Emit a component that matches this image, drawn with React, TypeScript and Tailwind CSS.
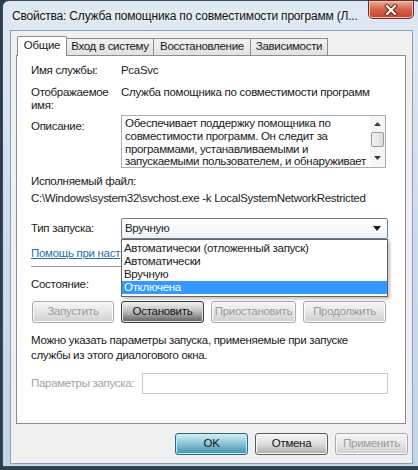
import React from "react";

const btnBase =
  "h-[22px] rounded-[3px] border flex items-center justify-center text-[11.5px] leading-none";

function DisabledBtn({ label, w }: { label: string; w: string }) {
  return (
    <div
      className={`${btnBase} ${w} border-[#a6abb0] bg-gradient-to-b from-[#f6f6f6] via-[#e6e6e6] to-[#cfcfcf] text-[#9a9a9a] shadow-[inset_0_0_0_1px_#fbfbfb]`}
    >
      {label}
    </div>
  );
}

export default function App() {
  return (
    <div className="w-[418px] h-[470px] overflow-hidden bg-[#2e3d4b] font-['Liberation_Sans','Noto_Sans',sans-serif] text-[11.5px] tracking-[-0.3px] text-[#1a1a1a]">
      {/* window */}
      <div className="relative ml-[2px] w-[420px] h-[467px] rounded-t-[7px] border border-[#3a4b5c] bg-gradient-to-b from-[#dfe9f3] via-[#cddced] to-[#c3d5e8] pl-[7px] flex flex-col">
        {/* title bar */}
        <div className="h-[29px] flex items-center">
          <div className="ml-[2px] whitespace-nowrap text-[12px] tracking-[-0.2px] text-[#111] [text-shadow:0_0_6px_#ffffff]">
            Свойства: Служба помощника по совместимости программ (Л...
          </div>
        </div>
        {/* close button */}
        <div className="absolute left-[365px] top-[-1px] w-[46px] h-[19px] rounded-b-[5px] border border-[#6b2a22] bg-gradient-to-b from-[#eab1a2] via-[#d5604a] to-[#c4432c] shadow-[inset_0_0_0_1px_#f3c3b6] flex items-center justify-center">
          <svg width="14" height="12" viewBox="0 0 14 12">
            <path d="M3 2 L11 10 M11 2 L3 10" stroke="#5a2018" strokeWidth="4" strokeLinecap="square" />
            <path d="M3 2 L11 10 M11 2 L3 10" stroke="#ffffff" strokeWidth="2.2" strokeLinecap="square" />
          </svg>
        </div>

        {/* content area */}
        <div className="w-[403px] h-[434px] border border-[#8a9fb3] bg-[#f0f0f0] flex flex-col">
          {/* tabs */}
          <div className="relative z-10 ml-[6px] mt-[5px] h-[20px] flex items-end">
            <div className="h-[20px] w-[50px] border border-b-0 border-[#898c95] bg-white rounded-t-[2px] flex items-center justify-center pb-[1px]">
              Общие
            </div>
            <div className="h-[18px] w-[87px] border border-l-0 border-[#898c95] bg-gradient-to-b from-[#f2f2f2] to-[#e1e1e1] flex items-center justify-center">
              Вход в систему
            </div>
            <div className="h-[18px] w-[97px] border border-l-0 border-[#898c95] bg-gradient-to-b from-[#f2f2f2] to-[#e1e1e1] flex items-center justify-center">
              Восстановление
            </div>
            <div className="h-[18px] w-[77px] border border-l-0 border-[#898c95] bg-gradient-to-b from-[#f2f2f2] to-[#e1e1e1] flex items-center justify-center">
              Зависимости
            </div>
          </div>

          {/* panel */}
          <div className="relative ml-[5px] mt-[-1px] w-[390px] h-[369px] border border-[#898c95] bg-white pl-[14px] pr-[17px] flex flex-col">
            {/* row 1 */}
            <div className="mt-[7px] flex leading-[15px]">
              <div className="w-[90px]">Имя службы:</div>
              <div>PcaSvc</div>
            </div>
            {/* row 2 */}
            <div className="mt-[8px] flex leading-[13px]">
              <div className="w-[90px]">
                Отображаемое
                <br />
                имя:
              </div>
              <div className="whitespace-nowrap">Служба помощника по совместимости программ</div>
            </div>
            {/* row 3 */}
            <div className="mt-[3px] flex">
              <div className="w-[90px] pt-[4px] leading-[15px]">Описание:</div>
              <div className="w-[265px] h-[53px] border border-[#abadb3] flex">
                <div className="flex-1 pl-[3px] pt-[1px] leading-[12.8px] overflow-hidden whitespace-nowrap">
                  Обеспечивает поддержку помощника по
                  <br />
                  совместимости программ. Он следит за
                  <br />
                  программами, устанавливаемыми и
                  <br />
                  запускаемыми пользователем, и обнаруживает
                </div>
                <div className="w-[15px] flex flex-col items-center bg-[#f6f6f6]">
                  <svg width="7" height="4" viewBox="0 0 7 4" className="mt-[6px]">
                    <path d="M0 4 L3.5 0 L7 4 Z" fill="#3a3a3a" />
                  </svg>
                  <div className="mt-[6px] w-[13px] h-[15px] rounded-[2px] border border-[#9a9a9a] bg-gradient-to-r from-[#f4f4f4] to-[#dcdcdc]" />
                  <svg width="7" height="4" viewBox="0 0 7 4" className="mt-[9px]">
                    <path d="M0 0 L3.5 4 L7 0 Z" fill="#3a3a3a" />
                  </svg>
                </div>
              </div>
            </div>
            {/* row 4 */}
            <div className="mt-[6px] leading-[15px]">Исполняемый файл:</div>
            <div className="mt-[2px] leading-[15px] whitespace-nowrap">
              C:\Windows\system32\svchost.exe -k LocalSystemNetworkRestricted
            </div>
            {/* row 6 combo */}
            <div className="relative mt-[12px] flex items-center">
              <div className="w-[90px] leading-[15px]">Тип запуска:</div>
              <div className="w-[267px] h-[21px] border border-[#6f8196] rounded-[2px] bg-gradient-to-b from-[#ffffff] to-[#eef3f8] flex items-center pl-[3px] pr-[6px]">
                <div className="flex-1">Вручную</div>
                <svg width="8" height="5" viewBox="0 0 8 5">
                  <path d="M0 0 L8 0 L4 5 Z" fill="#1a1a1a" />
                </svg>
              </div>
              {/* dropdown list */}
              <div className="absolute z-20 left-[90px] top-[21px] w-[267px] border border-[#646464] bg-white pt-[2px] pb-[2px] leading-[13px] shadow-[2px_2px_3px_rgba(0,0,0,0.25)]">
                <div className="pl-[2px]">Автоматически (отложенный запуск)</div>
                <div className="pl-[2px]">Автоматически</div>
                <div className="pl-[2px]">Вручную</div>
                <div className="pl-[2px] bg-[#3399ff] text-white">Отключена</div>
              </div>
            </div>
            {/* link (rest is hidden under the open list) */}
            <div className="mt-[7px] w-[90px] overflow-hidden leading-[15px] text-[#1f6fa8] underline whitespace-nowrap">
              Помощь при наст
            </div>
            <div className="mt-[5px] h-[2px] border-t border-[#a0a0a0] border-b border-b-white" />
            <div className="mt-[9px] flex leading-[15px]">
              <div className="w-[90px]">Состояние:</div>
            </div>
            {/* buttons */}
            <div className="mt-[9px] flex gap-[7px] pl-[1px]">
              <DisabledBtn label="Запустить" w="w-[82px]" />
              <div
                className={`${btnBase} w-[83px] border-[#3c3c3c] bg-gradient-to-b from-[#f4f4f4] via-[#b9b9b9] to-[#5e5e5e] text-[#111] shadow-[inset_0_0_0_1px_#e8e8e8]`}
              >
                Остановить
              </div>
              <DisabledBtn label="Приостановить" w="w-[85px]" />
              <DisabledBtn label="Продолжить" w="w-[83px]" />
            </div>
            <div className="mt-[10px] leading-[15px]">
              Можно указать параметры запуска, применяемые при запуске
              <br />
              службы из этого диалогового окна.
            </div>
            <div className="mt-[10px] flex items-center">
              <div className="w-[111px] whitespace-nowrap text-[#a3a3a3]">Параметры запуска:</div>
              <div className="w-[246px] h-[21px] border border-[#c5c8cc] bg-white" />
            </div>
          </div>

          {/* bottom buttons */}
          <div className="mt-[9px] flex justify-end gap-[7px] pr-[4px]">
            <div
              className={`${btnBase} w-[73px] border-[#2c6a82] bg-gradient-to-b from-[#d9eef5] via-[#86c3d5] to-[#3d8fa9] text-[#111] shadow-[inset_0_0_0_1px_#c9eaf3]`}
            >
              OK
            </div>
            <div
              className={`${btnBase} w-[73px] border-[#5a5a5a] bg-gradient-to-b from-[#f6f6f6] via-[#dedede] to-[#a9a9a9] text-[#111] shadow-[inset_0_0_0_1px_#fafafa]`}
            >
              Отмена
            </div>
            <DisabledBtn label="Применить" w="w-[73px]" />
          </div>
        </div>
      </div>
    </div>
  );
}
